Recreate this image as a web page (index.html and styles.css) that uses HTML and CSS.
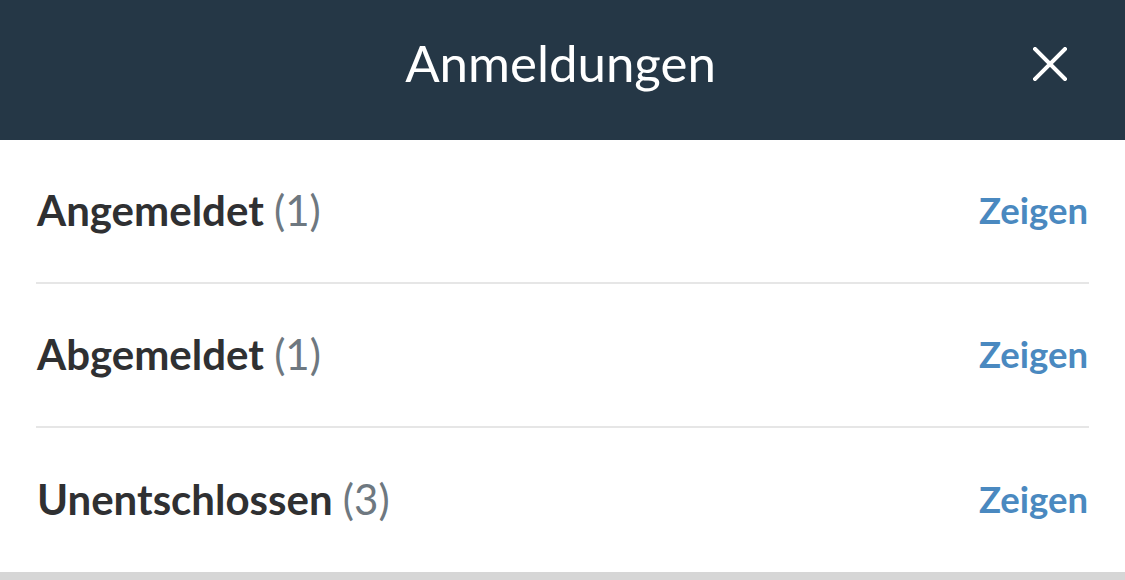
FILE: index.html
```html
<!DOCTYPE html>
<html lang="de">
<head>
    <meta charset="UTF-8">
    <meta name="viewport" content="width=device-width, initial-scale=1.0">
    <title>Anmeldungen</title>
    <link rel="stylesheet" href="styles.css">
</head>
<body>
  <div class="sheet">
    <!-- Header -->
    <header class="sheet-header">
      <h1 class="sheet-title">Anmeldungen</h1>
      <button class="close-btn" aria-label="Schließen">
        <svg width="34" height="34" viewBox="0 0 34 34">
          <path d="M2 2 L32 32 M32 2 L2 32" stroke="#fff" stroke-width="4" stroke-linecap="square" fill="none"/>
        </svg>
      </button>
    </header>

    <!-- List -->
    <ul class="status-list">
      <li class="status-row">
        <span class="status-label">Angemeldet <span class="status-count">(1)</span></span>
        <a href="#" class="status-link">Zeigen</a>
      </li>
      <li class="status-row">
        <span class="status-label">Abgemeldet <span class="status-count">(1)</span></span>
        <a href="#" class="status-link">Zeigen</a>
      </li>
      <li class="status-row">
        <span class="status-label">Unentschlossen <span class="status-count">(3)</span></span>
        <a href="#" class="status-link">Zeigen</a>
      </li>
    </ul>
  </div>
  <div class="sheet-bottom"></div>
</body>
</html>
```

FILE: styles.css
```css
* {
  box-sizing: border-box;
  margin: 0;
  padding: 0;
}

body {
  font-family: Lato, "Open Sans", sans-serif;
  color: #2f3032;
  background-color: #d6d6d6;
  overflow: hidden;
}

.sheet {
  background-color: #fff;
}

/* Header */

.sheet-header {
  height: 140px;
  background-color: #253746;
  display: flex;
  align-items: center;
  justify-content: center;
  position: relative;
}

.sheet-title {
  font-size: 51px;
  font-weight: 400;
  color: #fff;
  margin-top: -15px;
  margin-left: -4px;
}

.close-btn {
  position: absolute;
  right: 58px;
  top: 47px;
  background: none;
  border: none;
  display: flex;
  cursor: pointer;
}

/* List */

.status-list {
  list-style: none;
  padding: 0 36px 0 36px;
}

.status-row {
  height: 144px;
  display: flex;
  align-items: center;
  justify-content: space-between;
  border-bottom: 2px solid #e6e6e6;
  padding: 0 1px 2px 1px;
}

.status-row:last-child {
  border-bottom: none;
}

.status-label {
  font-size: 42px;
  font-weight: 700;
  color: #2f3032;
}

.status-count {
  font-weight: 400;
  color: #6e7880;
}

.status-link {
  font-size: 36.5px;
  font-weight: 700;
  color: #4a89c0;
  text-decoration: none;
}
```
